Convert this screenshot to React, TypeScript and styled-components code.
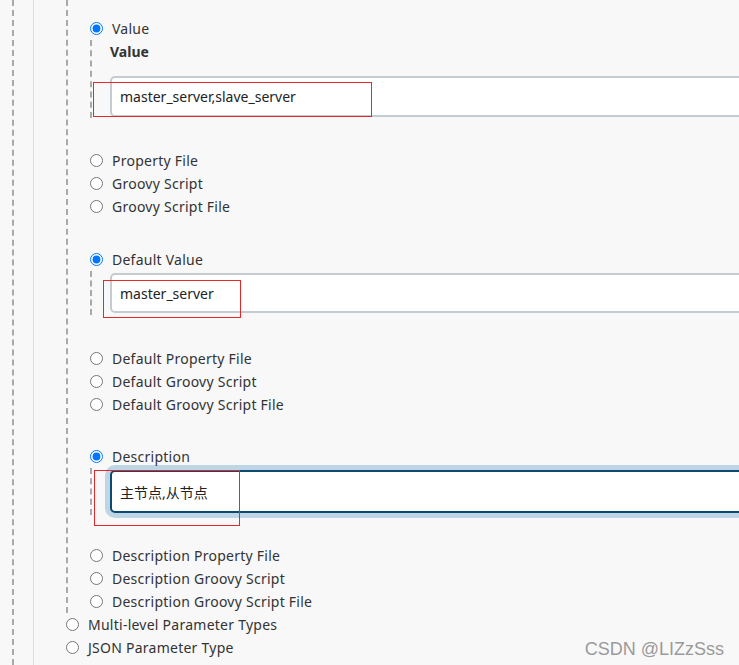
import React from 'react';
import styled, { createGlobalStyle } from 'styled-components';

const GlobalStyle = createGlobalStyle`
  html, body {
    margin: 0;
    padding: 0;
    background: #f8f8f8;
  }
  body {
    font-family: "Noto Sans", "Noto Sans CJK SC", sans-serif;
    font-size: 14px;
    color: #333;
  }
`;

const Page = styled.div`
  position: relative;
  width: 739px;
  height: 665px;
  overflow: hidden;
  background: #f8f8f8;
  padding-left: 12px;
  box-sizing: border-box;
`;

const OuterRail = styled.div`
  height: 100%;
  border-left: 2px dashed #a9a9a9;
  padding-left: 19px;
`;

const InnerRail = styled.div`
  height: 100%;
  border-left: 1px solid #dedede;
  padding-left: 32px;
`;

const Nested = styled.div`
  border-left: 2px dashed #a9a9a9;
  padding: 17px 0 0 22px;
`;

const Sub = styled.div<{ $bottom?: number }>`
  border-left: 2px dashed #a9a9a9;
  padding: 2px 0 ${p => p.$bottom ?? 2}px 18px;
`;

const Gap = styled.div<{ $h: number }>`
  height: ${p => p.$h}px;
`;

const Row = styled.label`
  display: flex;
  align-items: center;
  gap: 9px;
  height: 23px;
  line-height: 23px;
  white-space: nowrap;
  letter-spacing: 0.25px;
  color: #333;
`;

const Radio = styled.input`
  width: 13px;
  height: 13px;
  margin: 0;
  flex: none;
  accent-color: #0075ff;
`;

const FieldTitle = styled.div`
  height: 20px;
  line-height: 20px;
  font-weight: bold;
  color: #333;
  margin-bottom: 14px;
`;

const TextBox = styled.input<{ $focus?: boolean; $h: number }>`
  display: block;
  box-sizing: border-box;
  width: 660px;
  height: ${p => p.$h}px;
  padding: 0 8px;
  border: 2px solid ${p => (p.$focus ? '#0b4a6e' : '#c4ccd2')};
  border-radius: 5px;
  background: #fff;
  font-family: "Noto Sans", "Noto Sans CJK SC", sans-serif;
  font-size: 14px;
  color: #222;
  outline: none;
  box-shadow: ${p => (p.$focus ? '0 0 0 5px #bdd5e4' : 'none')};
`;

const Mark = styled.div`
  position: absolute;
  border: 1px solid #e5282c;
  box-sizing: border-box;
  pointer-events: none;
`;

const Watermark = styled.div`
  position: absolute;
  right: 15px;
  bottom: 5px;
  font-family: "Liberation Sans", Arial, sans-serif;
  font-size: 18px;
  color: #999;
  text-shadow: 0 0 1px #fff;
`;

const Option = ({ label, checked }: { label: string; checked?: boolean }) => (
  <Row>
    <Radio type="radio" checked={!!checked} onChange={() => {}} />
    <span>{label}</span>
  </Row>
);

export default function App() {
  return (
    <Page>
      <GlobalStyle />
      <OuterRail>
        <InnerRail>
          <Nested>
            <Option label="Value" checked />
            <Sub $bottom={1}>
              <FieldTitle>Value</FieldTitle>
              <TextBox $h={41} readOnly value="master_server,slave_server" />
            </Sub>
            <Gap $h={31} />
            <Option label="Property File" />
            <Option label="Groovy Script" />
            <Option label="Groovy Script File" />
            <Gap $h={30} />
            <Option label="Default Value" checked />
            <Sub>
              <TextBox $h={40} readOnly value="master_server" />
            </Sub>
            <Gap $h={32} />
            <Option label="Default Property File" />
            <Option label="Default Groovy Script" />
            <Option label="Default Groovy Script File" />
            <Gap $h={29} />
            <Option label="Description" checked />
            <Sub>
              <TextBox $h={43} $focus readOnly value="主节点,从节点" />
            </Sub>
            <Gap $h={29} />
            <Option label="Description Property File" />
            <Option label="Description Groovy Script" />
            <Option label="Description Groovy Script File" />
          </Nested>
          <Option label="Multi-level Parameter Types" />
          <Option label="JSON Parameter Type" />
        </InnerRail>
      </OuterRail>
      <Mark style={{ left: 93, top: 82, width: 279, height: 35 }} />
      <Mark style={{ left: 103, top: 280, width: 138, height: 38 }} />
      <Mark style={{ left: 94, top: 470, width: 146, height: 56 }} />
      <Watermark>CSDN @LIZzSss</Watermark>
    </Page>
  );
}
